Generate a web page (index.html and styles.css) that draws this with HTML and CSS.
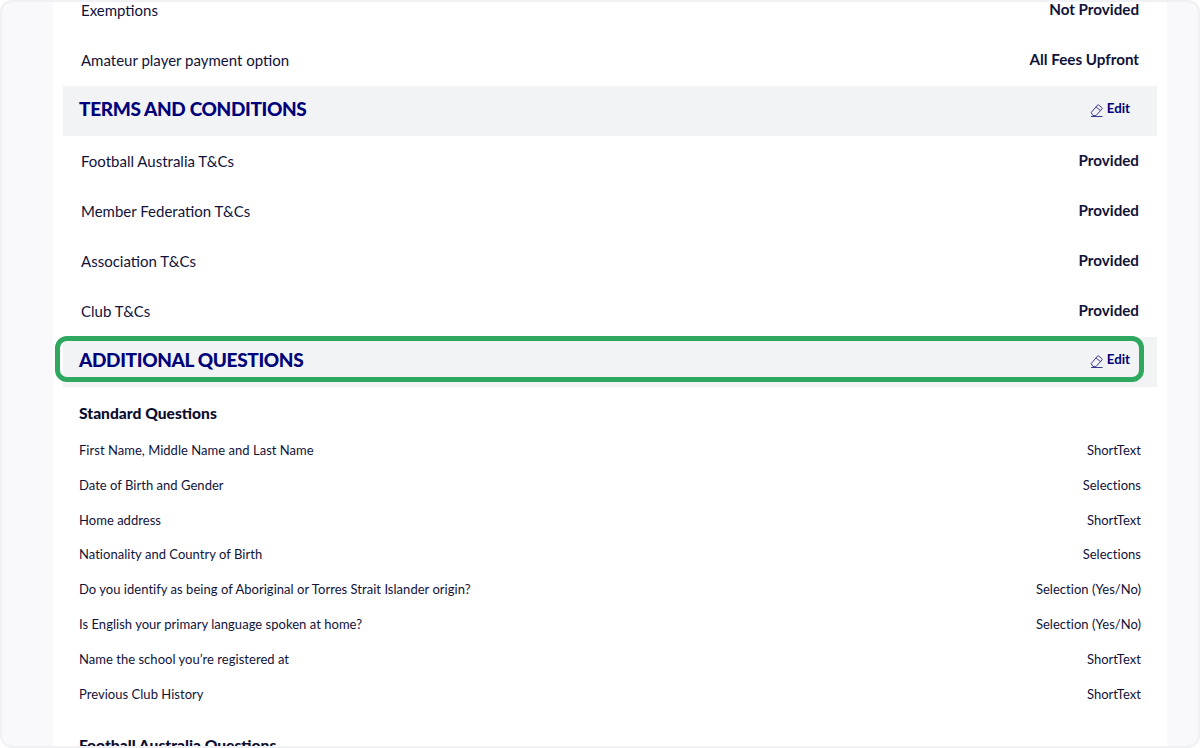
FILE: index.html
```html
<!DOCTYPE html>
<html lang="en">
<head>
    <meta charset="UTF-8">
    <meta name="viewport" content="width=device-width, initial-scale=1.0">
    <title>Registration Summary</title>
    <link rel="stylesheet" href="styles.css">
</head>
<body>
    <div class="frame">
        <div class="panel">
            <div class="summary-row"><span>Exemptions</span><strong>Not Provided</strong></div>
            <div class="summary-row"><span>Amateur player payment option</span><strong>All Fees Upfront</strong></div>

            <div class="section-bar">
                <h2>TERMS AND CONDITIONS</h2>
                <a class="edit-link" href="#">
                    <svg viewBox="0 0 14 14" width="14" height="14" fill="none" stroke="#3a3a90" stroke-width="1"><path d="M1.2 9.6 7.4 2.2a1 1 0 0 1 1.4-.1l3 2.5a1 1 0 0 1 .1 1.4L6 12.6H3z"/><path d="M6 3.9l4.2 3.5"/><path d="M1 13.5h11.5"/></svg>
                    Edit
                </a>
            </div>
            <div class="summary-row"><span>Football Australia T&amp;Cs</span><strong>Provided</strong></div>
            <div class="summary-row"><span>Member Federation T&amp;Cs</span><strong>Provided</strong></div>
            <div class="summary-row"><span>Association T&amp;Cs</span><strong>Provided</strong></div>
            <div class="summary-row"><span>Club T&amp;Cs</span><strong>Provided</strong></div>

            <div class="section-bar">
                <h2>ADDITIONAL QUESTIONS</h2>
                <a class="edit-link" href="#">
                    <svg viewBox="0 0 14 14" width="14" height="14" fill="none" stroke="#3a3a90" stroke-width="1"><path d="M1.2 9.6 7.4 2.2a1 1 0 0 1 1.4-.1l3 2.5a1 1 0 0 1 .1 1.4L6 12.6H3z"/><path d="M6 3.9l4.2 3.5"/><path d="M1 13.5h11.5"/></svg>
                    Edit
                </a>
                <div class="highlight"></div>
            </div>

            <div class="questions">
                <h3>Standard Questions</h3>
                <div class="question-row"><span>First Name, Middle Name and Last Name</span><span>ShortText</span></div>
                <div class="question-row"><span>Date of Birth and Gender</span><span>Selections</span></div>
                <div class="question-row"><span>Home address</span><span>ShortText</span></div>
                <div class="question-row"><span>Nationality and Country of Birth</span><span>Selections</span></div>
                <div class="question-row"><span>Do you identify as being of Aboriginal or Torres Strait Islander origin?</span><span>Selection (Yes/No)</span></div>
                <div class="question-row"><span>Is English your primary language spoken at home?</span><span>Selection (Yes/No)</span></div>
                <div class="question-row"><span>Name the school you’re registered at</span><span>ShortText</span></div>
                <div class="question-row"><span>Previous Club History</span><span>ShortText</span></div>
                <h3 class="next-group">Football Australia Questions</h3>
            </div>
        </div>
    </div>
</body>
</html>
```

FILE: styles.css
```css
html, body {
    height: 100%;
}

body {
    margin: 0;
    overflow: hidden;
    background: #ffffff;
    font-family: Lato, "Open Sans", sans-serif;
    color: #11123a;
}

.frame {
    height: 748px;
    box-sizing: border-box;
    border: 2px solid #f0f1f4;
    border-radius: 12px;
    background: #f9f9fb;
    overflow: hidden;
    padding: 0 31px 0 51px;
}

.panel {
    background: #ffffff;
    margin-top: -17px;
    padding: 0 10px;
    height: 800px;
}

.summary-row {
    display: flex;
    justify-content: space-between;
    align-items: center;
    height: 50.25px;
    padding: 0 18px;
    font-size: 15px;
}

.summary-row strong {
    font-weight: 700;
    font-size: 15.2px;
    margin-bottom: 2px;
}

.section-bar {
    position: relative;
    display: flex;
    justify-content: space-between;
    align-items: center;
    box-sizing: border-box;
    height: 50px;
    padding: 0 27px 5px 16px;
    background: #f2f3f5;
}

.section-bar h2 {
    margin: 0;
    font-size: 19px;
    font-weight: 900;
    letter-spacing: -0.35px;
    color: #00007a;
}

.edit-link {
    display: flex;
    align-items: center;
    gap: 3px;
    font-size: 13.3px;
    font-weight: 700;
    color: #00007a;
    text-decoration: none;
}

.edit-link svg {
    margin-top: 4px;
}

.highlight {
    position: absolute;
    left: -8px;
    top: -0.5px;
    width: 1089px;
    height: 46px;
    box-sizing: border-box;
    border: 5px solid #2fa85f;
    border-radius: 12px;
}

.questions {
    padding: 17.5px 16px 0 16px;
}

.questions h3 {
    margin: 0 0 10.6px;
    font-size: 15.6px;
    line-height: 18px;
    font-weight: 900;
    color: #0c0d2e;
}

.questions h3.next-group {
    margin-top: 25px;
}

.question-row {
    display: flex;
    justify-content: space-between;
    align-items: center;
    height: 34.8px;
    font-size: 13px;
    letter-spacing: 0.03px;
}
```
